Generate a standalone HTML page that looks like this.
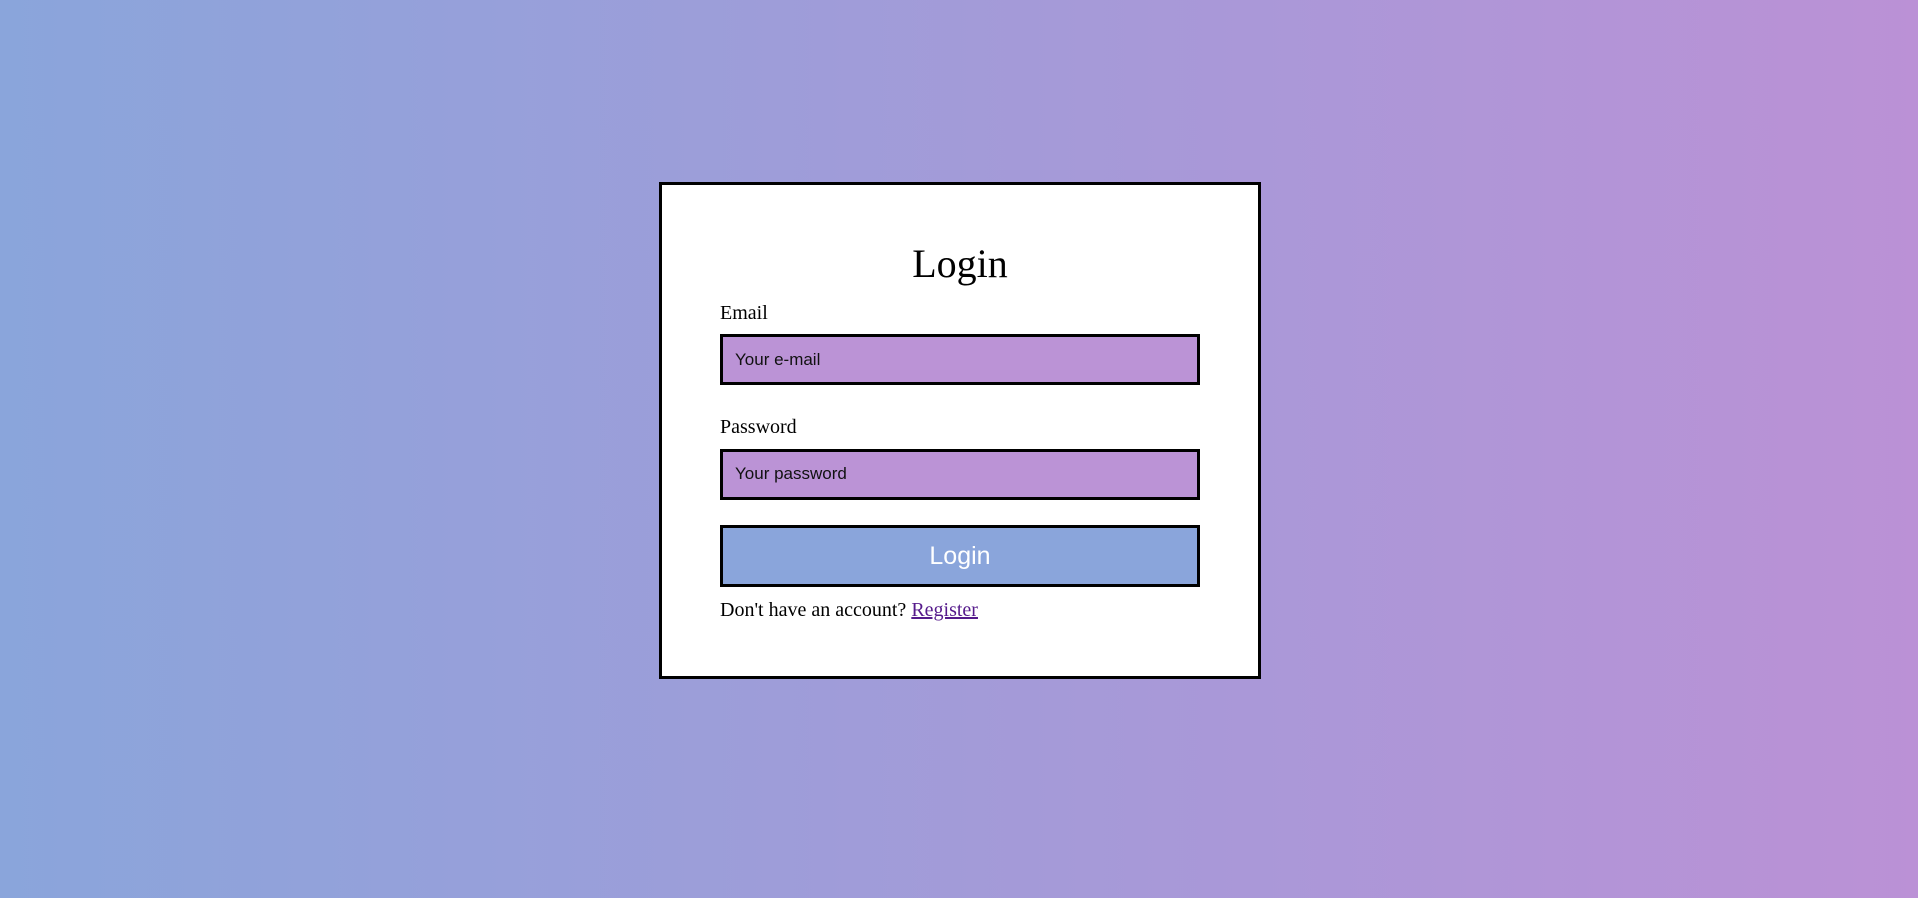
<!DOCTYPE html>
<html><head><style>
html,body{margin:0;padding:0;width:1918px;height:898px;overflow:hidden}
body{background:linear-gradient(90deg,#8aa5db,#bb91d6);font-family:"Liberation Serif",serif;position:relative}
.box{position:absolute;left:659px;top:182px;width:596px;height:491px;border:3px solid #000;background:#fff}
.a{position:absolute;margin:0;white-space:nowrap}
h1{font-weight:normal;font-size:40px;left:0;width:596px;text-align:center;top:55px}
.lbl{font-size:20px;left:58px;color:#000}
.in{position:absolute;left:58px;width:474px;height:45px;border:3px solid #000;background:#bb93d6;font-family:"Liberation Sans",sans-serif;font-size:17px;line-height:45px;box-sizing:content-box}
.in span{margin-left:12px;color:#111}
.btn{position:absolute;left:58px;top:340px;width:474px;height:56px;border:3px solid #000;background:#8aa5db;color:#fff;font-family:"Liberation Sans",sans-serif;font-size:25px;text-align:center;line-height:56px}
a{color:#551a8b}
</style></head><body>
<div class="box">
<h1 class="a">Login</h1>
<div class="a lbl" style="top:117px">Email</div>
<div class="in" style="top:149px"><span>Your e-mail</span></div>
<div class="a lbl" style="top:231px">Password</div>
<div class="in" style="top:264px;line-height:43px"><span>Your password</span></div>
<div class="btn">Login</div>
<div class="a lbl" style="top:414px">Don't have an account? <a href="#">Register</a></div>
</div>
</body></html>
